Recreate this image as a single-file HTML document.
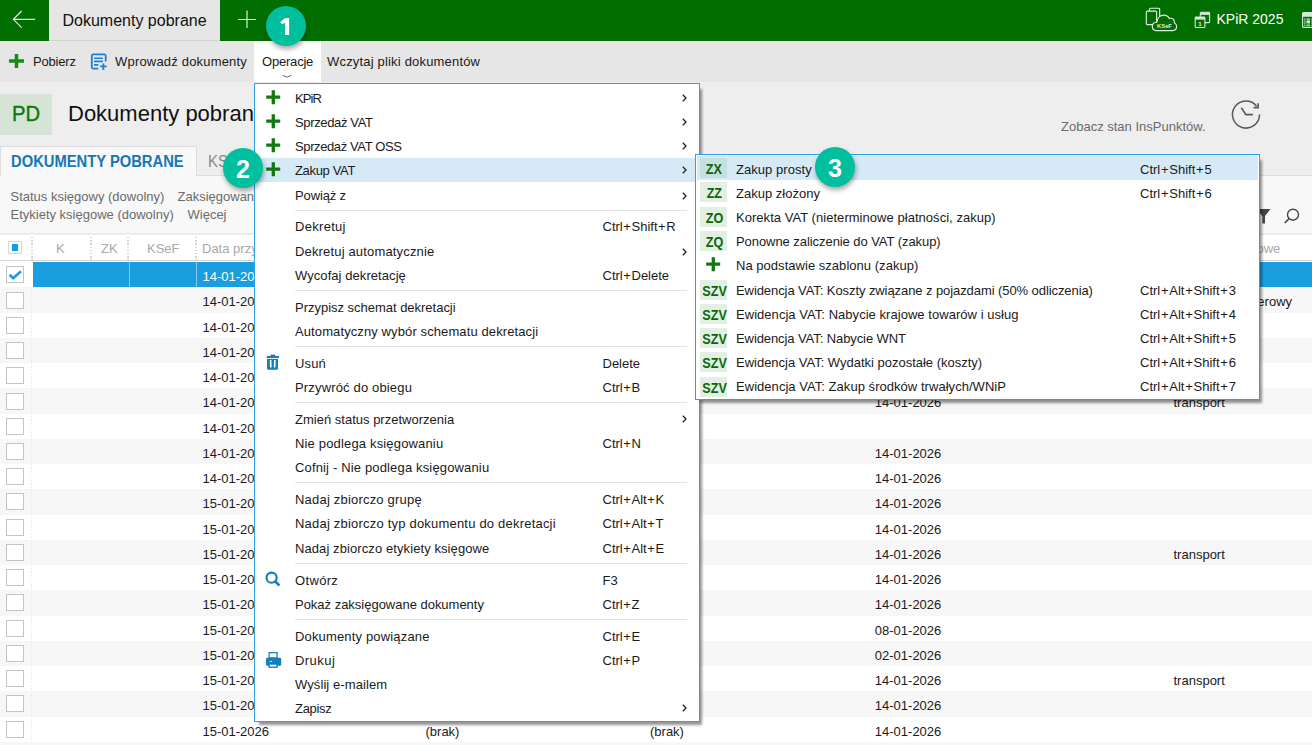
<!DOCTYPE html>
<html><head><meta charset="utf-8"><style>
*{box-sizing:border-box;margin:0;padding:0}
html,body{width:1312px;height:745px;overflow:hidden;background:#fff;font-family:"Liberation Sans",sans-serif;font-size:13px;color:#1a1a1a}
.a{position:absolute}
.t{position:absolute;white-space:nowrap;line-height:1}
.g{background:#f7f7f7}
.cb{position:absolute;left:6px;width:18px;height:17px;border:1.5px solid #c4c4c4;background:#fff}
.sep{position:absolute;width:392px;height:1px;background:#e3e3e3}
.hl{background:#d5e9f7}
.bd{position:absolute;width:26.8px;height:20px;background:#e4efe4;color:#0a680a;font-weight:bold;font-size:14.5px;text-align:center;line-height:20px}
.bd span{display:inline-block;transform:translate(0.5px,1.3px) scaleX(0.87)}
.badge{position:absolute;width:40px;height:40px;border-radius:50%;background:#00bf9f;color:#fff;font-weight:bold;font-size:25px;text-align:center;line-height:42.6px;box-shadow:1px 3px 5px rgba(0,0,0,.35)}
</style></head><body>
<div class="a" style="left:0px;top:0px;width:1312px;height:41px;background:#006e00"></div>
<div class="a" style="left:49px;top:0px;width:171px;height:40px;background:#e6e6e6"></div>
<div class="a" style="left:49px;top:40px;width:171px;height:1px;background:#c9d8c9"></div>
<div class="t" style="left:62.50px;top:12.76px;font-size:16px;color:#111">Dokumenty pobrane</div>
<svg class="a" style="left:0px;top:0px" width="49" height="41" viewBox="0 0 49 41"><path d="M35.2 19.3H13.6M21.6 11L13.4 19.3L21.6 27.6" fill="none" stroke="#e4eee4" stroke-width="1.15"/></svg>
<svg class="a" style="left:236px;top:9px" width="22" height="22" viewBox="0 0 22 22"><path d="M11 1.5V19M2 10.5h18" fill="none" stroke="#dfe9df" stroke-width="1.2"/></svg>
<div class="t" style="left:1216.50px;top:12.35px;font-size:14px;color:#fff">KPiR 2025</div>
<div class="a" style="left:0px;top:41px;width:1312px;height:41px;background:#e6e6e6"></div>
<div class="a" style="left:254px;top:41px;width:67px;height:41px;background:#fff"></div>
<div class="t" style="left:33.00px;top:55.20px;letter-spacing:-0.2px">Pobierz</div>
<div class="t" style="left:115.00px;top:55.20px;letter-spacing:0.19px">Wprowadź dokumenty</div>
<div class="t" style="left:262.00px;top:55.20px;letter-spacing:-0.2px">Operacje</div>
<div class="t" style="left:327.00px;top:55.20px;letter-spacing:0.18px">Wczytaj pliki dokumentów</div>
<div class="a" style="left:0px;top:82px;width:1312px;height:152px;background:#eeeeee"></div>
<div class="a" style="left:0px;top:94px;width:52px;height:41px;background:#d6e4d6"></div>
<div class="t" style="left:12.20px;top:102.75px;font-size:22.5px;color:#0b790b;-webkit-text-stroke:0.4px #0b790b;transform:scaleX(0.9);transform-origin:0 0">PD</div>
<div class="t" style="left:68.00px;top:102.68px;font-size:22px;color:#111">Dokumenty pobrane</div>
<div class="t" style="left:1061.00px;top:119.60px;color:#6b6b6b">Zobacz stan InsPunktów.</div>
<div class="a" style="left:0px;top:175px;width:1312px;height:1px;background:#dedede"></div>
<div class="a" style="left:0px;top:146px;width:197px;height:30px;background:#f8f8f8;border:1px solid #dedede;border-bottom:none"></div>
<div class="a" style="left:0px;top:176px;width:1312px;height:58px;background:#f8f8f8"></div>
<div class="t" style="left:11.30px;top:153.66px;font-size:16px;font-weight:bold;color:#1477b5;transform:scaleX(0.922);transform-origin:0 0">DOKUMENTY POBRANE</div>
<div class="t" style="left:208.00px;top:153.66px;font-size:16px;color:#8a8a8a;transform:scaleX(0.93);transform-origin:0 0">KSEF</div>
<div class="t" style="left:10.50px;top:190.40px;color:#6b6b6b">Status księgowy (dowolny)</div>
<div class="t" style="left:177.50px;top:190.40px;color:#6b6b6b">Zaksięgowany</div>
<div class="t" style="left:10.50px;top:207.80px;color:#6b6b6b">Etykiety księgowe (dowolny)</div>
<div class="t" style="left:187.50px;top:207.80px;color:#6b6b6b">Więcej</div>
<div class="a" style="left:0px;top:234px;width:1312px;height:27px;background:#fff;border-bottom:1px solid #d6d6d6"></div>
<div class="a" style="left:8px;top:241px;width:14px;height:13px;border:1px solid #d6d6d6;background:#fff"></div>
<div class="a" style="left:12px;top:244px;width:6px;height:7px;background:#0ea0e0"></div>
<div class="a" style="left:0px;top:233px;width:1312px;height:1.6px;background:#ececec"></div>
<div class="t" style="left:56.00px;top:242.20px;color:#a8a8a8">K</div>
<div class="t" style="left:101.00px;top:242.20px;color:#a8a8a8">ZK</div>
<div class="t" style="left:147.00px;top:242.20px;color:#a8a8a8">KSeF</div>
<div class="t" style="left:202.00px;top:242.20px;color:#a8a8a8">Data przyjęcia</div>
<div class="t" style="left:1177.00px;top:242.20px;color:#a8a8a8">Etykiety księgowe</div>
<div class="a" style="left:30.5px;top:237px;width:2px;height:23px;background:repeating-linear-gradient(to bottom,#d4d4d4 0 1.5px,transparent 1.5px 3.2px)"></div>
<div class="a" style="left:89.5px;top:237px;width:2px;height:23px;background:repeating-linear-gradient(to bottom,#d4d4d4 0 1.5px,transparent 1.5px 3.2px)"></div>
<div class="a" style="left:126.5px;top:237px;width:2px;height:23px;background:repeating-linear-gradient(to bottom,#d4d4d4 0 1.5px,transparent 1.5px 3.2px)"></div>
<div class="a" style="left:194.5px;top:237px;width:2px;height:23px;background:repeating-linear-gradient(to bottom,#d4d4d4 0 1.5px,transparent 1.5px 3.2px)"></div>
<div class="a" style="left:33px;top:262.00px;width:1279px;height:25.24px;background:#1b9ee0"></div>
<div class="cb" style="top:266.30px"></div>
<svg class="a" style="left:8px;top:269.0px" width="15" height="12" viewBox="0 0 15 12"><path d="M1.6 5.8L5.2 9.2L13 2.2" fill="none" stroke="#1b9ee0" stroke-width="2.6"/></svg>
<div class="a" style="left:129px;top:262.00px;width:1px;height:25.24px;background:#86c9ee"></div>
<div class="a" style="left:196px;top:262.00px;width:1px;height:25.24px;background:#86c9ee"></div>
<div class="t" style="left:202.50px;top:270.20px;color:#fff">14-01-2026</div>
<div class="a g" style="left:0;top:287.24px;width:1312px;height:25.54px"></div>
<div class="cb" style="top:291.54px"></div>
<div class="a" style="left:31px;top:287.24px;width:1px;height:25.24px;background:repeating-linear-gradient(to bottom,#ebebeb 0 1.5px,transparent 1.5px 3.2px)"></div>
<div class="t" style="left:202.50px;top:295.44px;">14-01-2026</div>
<div class="t" style="left:874.80px;top:295.44px;">14-01-2026</div>
<div class="t" style="left:1181.50px;top:295.44px;">transport rowerowy</div>
<div class="cb" style="top:316.78px"></div>
<div class="a" style="left:31px;top:312.48px;width:1px;height:25.24px;background:repeating-linear-gradient(to bottom,#ebebeb 0 1.5px,transparent 1.5px 3.2px)"></div>
<div class="t" style="left:202.50px;top:320.68px;">14-01-2026</div>
<div class="t" style="left:874.80px;top:320.68px;">14-01-2026</div>
<div class="a g" style="left:0;top:337.72px;width:1312px;height:25.54px"></div>
<div class="cb" style="top:342.02px"></div>
<div class="a" style="left:31px;top:337.72px;width:1px;height:25.24px;background:repeating-linear-gradient(to bottom,#ebebeb 0 1.5px,transparent 1.5px 3.2px)"></div>
<div class="t" style="left:202.50px;top:345.92px;">14-01-2026</div>
<div class="t" style="left:874.80px;top:345.92px;">14-01-2026</div>
<div class="cb" style="top:367.26px"></div>
<div class="a" style="left:31px;top:362.96px;width:1px;height:25.24px;background:repeating-linear-gradient(to bottom,#ebebeb 0 1.5px,transparent 1.5px 3.2px)"></div>
<div class="t" style="left:202.50px;top:371.16px;">14-01-2026</div>
<div class="t" style="left:874.80px;top:371.16px;">14-01-2026</div>
<div class="a g" style="left:0;top:388.20px;width:1312px;height:25.54px"></div>
<div class="cb" style="top:392.50px"></div>
<div class="a" style="left:31px;top:388.20px;width:1px;height:25.24px;background:repeating-linear-gradient(to bottom,#ebebeb 0 1.5px,transparent 1.5px 3.2px)"></div>
<div class="t" style="left:202.50px;top:396.40px;">14-01-2026</div>
<div class="t" style="left:874.80px;top:396.40px;">14-01-2026</div>
<div class="t" style="left:1173.50px;top:396.40px;">transport</div>
<div class="cb" style="top:417.74px"></div>
<div class="a" style="left:31px;top:413.44px;width:1px;height:25.24px;background:repeating-linear-gradient(to bottom,#ebebeb 0 1.5px,transparent 1.5px 3.2px)"></div>
<div class="t" style="left:202.50px;top:421.64px;">14-01-2026</div>
<div class="a g" style="left:0;top:438.68px;width:1312px;height:25.54px"></div>
<div class="cb" style="top:442.98px"></div>
<div class="a" style="left:31px;top:438.68px;width:1px;height:25.24px;background:repeating-linear-gradient(to bottom,#ebebeb 0 1.5px,transparent 1.5px 3.2px)"></div>
<div class="t" style="left:202.50px;top:446.88px;">14-01-2026</div>
<div class="t" style="left:874.80px;top:446.88px;">14-01-2026</div>
<div class="cb" style="top:468.22px"></div>
<div class="a" style="left:31px;top:463.92px;width:1px;height:25.24px;background:repeating-linear-gradient(to bottom,#ebebeb 0 1.5px,transparent 1.5px 3.2px)"></div>
<div class="t" style="left:202.50px;top:472.12px;">14-01-2026</div>
<div class="t" style="left:874.80px;top:472.12px;">14-01-2026</div>
<div class="a g" style="left:0;top:489.16px;width:1312px;height:25.54px"></div>
<div class="cb" style="top:493.46px"></div>
<div class="a" style="left:31px;top:489.16px;width:1px;height:25.24px;background:repeating-linear-gradient(to bottom,#ebebeb 0 1.5px,transparent 1.5px 3.2px)"></div>
<div class="t" style="left:202.50px;top:497.36px;">15-01-2026</div>
<div class="t" style="left:874.80px;top:497.36px;">14-01-2026</div>
<div class="cb" style="top:518.70px"></div>
<div class="a" style="left:31px;top:514.40px;width:1px;height:25.24px;background:repeating-linear-gradient(to bottom,#ebebeb 0 1.5px,transparent 1.5px 3.2px)"></div>
<div class="t" style="left:202.50px;top:522.60px;">15-01-2026</div>
<div class="t" style="left:874.80px;top:522.60px;">14-01-2026</div>
<div class="a g" style="left:0;top:539.64px;width:1312px;height:25.54px"></div>
<div class="cb" style="top:543.94px"></div>
<div class="a" style="left:31px;top:539.64px;width:1px;height:25.24px;background:repeating-linear-gradient(to bottom,#ebebeb 0 1.5px,transparent 1.5px 3.2px)"></div>
<div class="t" style="left:202.50px;top:547.84px;">15-01-2026</div>
<div class="t" style="left:874.80px;top:547.84px;">14-01-2026</div>
<div class="t" style="left:1173.50px;top:547.84px;">transport</div>
<div class="cb" style="top:569.18px"></div>
<div class="a" style="left:31px;top:564.88px;width:1px;height:25.24px;background:repeating-linear-gradient(to bottom,#ebebeb 0 1.5px,transparent 1.5px 3.2px)"></div>
<div class="t" style="left:202.50px;top:573.08px;">15-01-2026</div>
<div class="t" style="left:874.80px;top:573.08px;">14-01-2026</div>
<div class="a g" style="left:0;top:590.12px;width:1312px;height:25.54px"></div>
<div class="cb" style="top:594.42px"></div>
<div class="a" style="left:31px;top:590.12px;width:1px;height:25.24px;background:repeating-linear-gradient(to bottom,#ebebeb 0 1.5px,transparent 1.5px 3.2px)"></div>
<div class="t" style="left:202.50px;top:598.32px;">15-01-2026</div>
<div class="t" style="left:874.80px;top:598.32px;">14-01-2026</div>
<div class="cb" style="top:619.66px"></div>
<div class="a" style="left:31px;top:615.36px;width:1px;height:25.24px;background:repeating-linear-gradient(to bottom,#ebebeb 0 1.5px,transparent 1.5px 3.2px)"></div>
<div class="t" style="left:202.50px;top:623.56px;">15-01-2026</div>
<div class="t" style="left:874.80px;top:623.56px;">08-01-2026</div>
<div class="a g" style="left:0;top:640.60px;width:1312px;height:25.54px"></div>
<div class="cb" style="top:644.90px"></div>
<div class="a" style="left:31px;top:640.60px;width:1px;height:25.24px;background:repeating-linear-gradient(to bottom,#ebebeb 0 1.5px,transparent 1.5px 3.2px)"></div>
<div class="t" style="left:202.50px;top:648.80px;">15-01-2026</div>
<div class="t" style="left:874.80px;top:648.80px;">02-01-2026</div>
<div class="cb" style="top:670.14px"></div>
<div class="a" style="left:31px;top:665.84px;width:1px;height:25.24px;background:repeating-linear-gradient(to bottom,#ebebeb 0 1.5px,transparent 1.5px 3.2px)"></div>
<div class="t" style="left:202.50px;top:674.04px;">15-01-2026</div>
<div class="t" style="left:874.80px;top:674.04px;">14-01-2026</div>
<div class="t" style="left:1173.50px;top:674.04px;">transport</div>
<div class="a g" style="left:0;top:691.08px;width:1312px;height:25.54px"></div>
<div class="cb" style="top:695.38px"></div>
<div class="a" style="left:31px;top:691.08px;width:1px;height:25.24px;background:repeating-linear-gradient(to bottom,#ebebeb 0 1.5px,transparent 1.5px 3.2px)"></div>
<div class="t" style="left:202.50px;top:699.28px;">15-01-2026</div>
<div class="t" style="left:874.80px;top:699.28px;">14-01-2026</div>
<div class="cb" style="top:720.62px"></div>
<div class="a" style="left:31px;top:716.32px;width:1px;height:25.24px;background:repeating-linear-gradient(to bottom,#ebebeb 0 1.5px,transparent 1.5px 3.2px)"></div>
<div class="t" style="left:202.50px;top:724.52px;">15-01-2026</div>
<div class="t" style="left:425.50px;top:724.52px;">(brak)</div>
<div class="t" style="left:650.00px;top:724.52px;">(brak)</div>
<div class="t" style="left:874.80px;top:724.52px;">14-01-2026</div>
<div class="a g" style="left:0;top:741.56px;width:1312px;height:25.54px"></div>
<div class="cb" style="top:745.86px"></div>
<div class="a" style="left:31px;top:741.56px;width:1px;height:25.24px;background:repeating-linear-gradient(to bottom,#ebebeb 0 1.5px,transparent 1.5px 3.2px)"></div>
<div class="t" style="left:202.50px;top:749.76px;">15-01-2026</div>
<svg class="a" style="left:9px;top:54px" width="15" height="14" viewBox="0 0 15 14"><path d="M7.5 0v14M0 7M0 7h15" stroke="#178a17" stroke-width="3.5"/></svg>
<svg class="a" style="left:90px;top:53px" width="18" height="18" viewBox="0 0 18 18"><path d="M8.3 15.6H3.3A1.5 1.5 0 0 1 1.8 14.1V2.9A1.5 1.5 0 0 1 3.3 1.4H14.2A1.5 1.5 0 0 1 15.7 2.9V8.4" fill="none" stroke="#1f7fd0" stroke-width="1.8"/><path d="M4.6 5.3h7.6M4.6 8.4h7.6M4.6 11.9h3.2" stroke="#1f7fd0" stroke-width="1.6" stroke-linecap="round"/><path d="M13.4 10.5v6.4M10.2 13.4h6.4" stroke="#1f7fd0" stroke-width="1.8"/></svg>
<svg class="a" style="left:282px;top:74px" width="10" height="5" viewBox="0 0 10 5"><path d="M1 1.2Q5 4.8 9 1.2" fill="none" stroke="#777" stroke-width="1.1"/></svg>
<svg class="a" style="left:1145px;top:7px" width="34" height="26" viewBox="0 0 34 26"><rect x="4.5" y="1.3" width="10.2" height="12" rx="1" fill="#006e00" stroke="#e3efe3" stroke-width="1.1"/><rect x="1.3" y="4.1" width="10.3" height="13.5" rx="1" fill="#006e00" stroke="#e3efe3" stroke-width="1.1"/><path d="M11.5 23.6C8.5 23.6 7.3 21.5 7.3 19.6C7.3 17.2 9.2 15.3 11.8 15.2C12.2 11 15 8.1 18.8 8.1C21.8 8.1 23.5 9.8 24.3 11.5C25 11.2 25.8 11.1 26.5 11.3C28.5 11.9 29.6 13.8 29.3 15.8C30.9 16.6 31.6 18 31.6 19.6C31.6 21.8 30 23.6 27.5 23.6Z" fill="#006e00" stroke="#e3efe3" stroke-width="1.1"/><text x="19.5" y="20.6" font-family="Liberation Sans" font-weight="bold" font-size="5.8" fill="#dfeadf" text-anchor="middle" style="text-rendering:geometricPrecision">KSeF</text></svg>
<svg class="a" style="left:1194px;top:11px" width="17" height="18" viewBox="0 0 17 18"><rect x="6.3" y="1.3" width="9.3" height="10.3" rx="0.8" fill="#006e00" stroke="#d8e8d8" stroke-width="1.1"/><rect x="6.3" y="1.3" width="9.3" height="2.6" fill="#d8e8d8"/><rect x="1.2" y="6" width="9.7" height="10.5" rx="0.8" fill="#006e00" stroke="#d8e8d8" stroke-width="1.1"/><rect x="1.2" y="6" width="9.7" height="2.6" fill="#d8e8d8"/><text x="6" y="15" font-family="Liberation Sans" font-weight="bold" font-size="6" fill="#e8f0e8" text-anchor="middle">1</text></svg>
<svg class="a" style="left:1302px;top:12px" width="14" height="16" viewBox="0 0 14 16"><rect x="0.6" y="0.6" width="16" height="14.8" rx="1" fill="#006e00" stroke="#d8e8d8" stroke-width="1.1"/><rect x="0.6" y="0.6" width="16" height="4.2" fill="#d8e8d8"/><g fill="#d8e8d8"><rect x="2.2" y="6.5" width="1.3" height="1.2"/><rect x="4.5" y="6.5" width="3.5" height="1.2"/><rect x="2.2" y="8.5" width="1.3" height="1.2"/><rect x="4.5" y="8.4" width="3.5" height="3"/><rect x="2.2" y="10.5" width="1.3" height="1.2"/><rect x="2.2" y="12.6" width="1.3" height="1.2"/><rect x="4.5" y="12.6" width="3.5" height="1.2"/><rect x="9.3" y="6.5" width="3" height="1.2"/><rect x="9.3" y="8.5" width="3" height="1.2"/><rect x="9.3" y="10.5" width="3" height="1.2"/><rect x="9.3" y="12.6" width="3" height="1.2"/></g></svg>
<svg class="a" style="left:1228px;top:96px" width="36" height="36" viewBox="0 0 36 36"><path d="M31.5 18.5A13.5 13.5 0 1 1 28.6 10.2" fill="none" stroke="#585858" stroke-width="1.5"/><path d="M30.2 7.2V11.6H25.6" fill="none" stroke="#585858" stroke-width="1.6"/><path d="M13.3 11.8L17.9 18.6H24.9" fill="none" stroke="#585858" stroke-width="1.6"/></svg>
<svg class="a" style="left:1256px;top:208px" width="16" height="16" viewBox="0 0 16 16"><path d="M0.8 1.1H14.5L9 8V15.5H6.3V8Z" fill="#454545"/></svg>
<svg class="a" style="left:1283px;top:208px" width="18" height="17" viewBox="0 0 18 17"><circle cx="10" cy="6.7" r="5.5" fill="none" stroke="#444" stroke-width="1.4"/><path d="M6.3 10.5L1.8 15" stroke="#444" stroke-width="1.7"/></svg>
<div class="a" style="left:254px;top:83px;width:446px;height:639px;background:#fff;border:1px solid #2ea2e4;box-shadow:3.5px 4.5px 2.5px -1.5px rgba(0,0,0,.42)"></div>
<svg class="a" style="left:266px;top:89.82px" width="15" height="15" viewBox="0 0 15 15"><path d="M7.3 0.2v14M0.2 7.1h14" stroke="#107810" stroke-width="3.3"/></svg>
<div class="t" style="left:295.00px;top:91.80px;letter-spacing:-0.933px">KPiR</div>
<svg class="a" style="left:681.5px;top:94.3px" width="6" height="9" viewBox="0 0 6 9"><path d="M0.8 0.8L4 4L0.8 7.2" fill="none" stroke="#222" stroke-width="1.3"/></svg>
<svg class="a" style="left:266px;top:113.97px" width="15" height="15" viewBox="0 0 15 15"><path d="M7.3 0.2v14M0.2 7.1h14" stroke="#107810" stroke-width="3.3"/></svg>
<div class="t" style="left:295.00px;top:115.70px;letter-spacing:-0.355px">Sprzedaż VAT</div>
<svg class="a" style="left:681.5px;top:118.2px" width="6" height="9" viewBox="0 0 6 9"><path d="M0.8 0.8L4 4L0.8 7.2" fill="none" stroke="#222" stroke-width="1.3"/></svg>
<svg class="a" style="left:266px;top:138.12px" width="15" height="15" viewBox="0 0 15 15"><path d="M7.3 0.2v14M0.2 7.1h14" stroke="#107810" stroke-width="3.3"/></svg>
<div class="t" style="left:295.00px;top:139.70px;letter-spacing:-0.387px">Sprzedaż VAT OSS</div>
<svg class="a" style="left:681.5px;top:142.2px" width="6" height="9" viewBox="0 0 6 9"><path d="M0.8 0.8L4 4L0.8 7.2" fill="none" stroke="#222" stroke-width="1.3"/></svg>
<div class="a" style="left:255px;top:158.37px;width:440px;height:23.7px;background:#d5e9f7"></div>
<svg class="a" style="left:266px;top:162.27px" width="15" height="15" viewBox="0 0 15 15"><path d="M7.3 0.2v14M0.2 7.1h14" stroke="#107810" stroke-width="3.3"/></svg>
<div class="t" style="left:295.00px;top:163.60px;letter-spacing:-0.338px">Zakup VAT</div>
<svg class="a" style="left:681.5px;top:166.1px" width="6" height="9" viewBox="0 0 6 9"><path d="M0.8 0.8L4 4L0.8 7.2" fill="none" stroke="#222" stroke-width="1.3"/></svg>
<div class="t" style="left:295.00px;top:189.10px;letter-spacing:-0.129px">Powiąż z</div>
<svg class="a" style="left:681.5px;top:191.6px" width="6" height="9" viewBox="0 0 6 9"><path d="M0.8 0.8L4 4L0.8 7.2" fill="none" stroke="#222" stroke-width="1.3"/></svg>
<div class="a" style="left:295px;top:209.8px;width:392px;height:1.2px;background:#e3e3e3"></div>
<div class="t" style="left:295.00px;top:220.00px;letter-spacing:0.3px">Dekretuj</div>
<div class="t" style="left:602.50px;top:220.00px;">Ctrl<span style="margin:0 0.6px">+</span>Shift<span style="margin:0 0.6px">+</span>R</div>
<div class="t" style="left:295.00px;top:245.10px;letter-spacing:0.162px">Dekretuj automatycznie</div>
<svg class="a" style="left:681.5px;top:247.6px" width="6" height="9" viewBox="0 0 6 9"><path d="M0.8 0.8L4 4L0.8 7.2" fill="none" stroke="#222" stroke-width="1.3"/></svg>
<div class="t" style="left:295.00px;top:269.00px;letter-spacing:0.065px">Wycofaj dekretację</div>
<div class="t" style="left:602.50px;top:269.00px;">Ctrl<span style="margin:0 0.6px">+</span>Delete</div>
<div class="a" style="left:295px;top:290px;width:392px;height:1.2px;background:#e3e3e3"></div>
<div class="t" style="left:295.00px;top:301.00px;letter-spacing:-0.019px">Przypisz schemat dekretacji</div>
<div class="t" style="left:295.00px;top:324.80px;letter-spacing:0.105px">Automatyczny wybór schematu dekretacji</div>
<div class="a" style="left:295px;top:346.1px;width:392px;height:1.2px;background:#e3e3e3"></div>
<svg class="a" style="left:266px;top:353.12px" width="14" height="18" viewBox="0 0 14 18"><path d="M0.8 4h12.2" stroke="#137fbb" stroke-width="2.2"/><rect x="4.7" y="1.6" width="4.3" height="1.8" fill="#137fbb"/><path d="M1 5.9V15.3Q1 16.8 2.5 16.8H10.5Q12 16.8 12 15.3V5.9Z" fill="#137fbb"/><path d="M4.6 7L4.8 14.6M8.85 7L8.65 14.6" stroke="#fff" stroke-width="1.6"/></svg>
<div class="t" style="left:295.00px;top:356.70px;letter-spacing:0.167px">Usuń</div>
<div class="t" style="left:602.50px;top:356.70px;">Delete</div>
<div class="t" style="left:295.00px;top:380.70px;letter-spacing:0.159px">Przywróć do obiegu</div>
<div class="t" style="left:602.50px;top:380.70px;">Ctrl<span style="margin:0 0.6px">+</span>B</div>
<div class="a" style="left:295px;top:401.8px;width:392px;height:1.2px;background:#e3e3e3"></div>
<div class="t" style="left:295.00px;top:412.70px;letter-spacing:0.008px">Zmień status przetworzenia</div>
<svg class="a" style="left:681.5px;top:415.2px" width="6" height="9" viewBox="0 0 6 9"><path d="M0.8 0.8L4 4L0.8 7.2" fill="none" stroke="#222" stroke-width="1.3"/></svg>
<div class="t" style="left:295.00px;top:436.90px;letter-spacing:0.164px">Nie podlega księgowaniu</div>
<div class="t" style="left:602.50px;top:436.90px;">Ctrl<span style="margin:0 0.6px">+</span>N</div>
<div class="t" style="left:295.00px;top:460.80px;letter-spacing:0.155px">Cofnij - Nie podlega księgowaniu</div>
<div class="a" style="left:295px;top:482.1px;width:392px;height:1.2px;background:#e3e3e3"></div>
<div class="t" style="left:295.00px;top:492.60px;letter-spacing:0.2px">Nadaj zbiorczo grupę</div>
<div class="t" style="left:602.50px;top:492.60px;">Ctrl<span style="margin:0 0.6px">+</span>Alt<span style="margin:0 0.6px">+</span>K</div>
<div class="t" style="left:295.00px;top:516.50px;letter-spacing:0.205px">Nadaj zbiorczo typ dokumentu do dekretacji</div>
<div class="t" style="left:602.50px;top:516.50px;">Ctrl<span style="margin:0 0.6px">+</span>Alt<span style="margin:0 0.6px">+</span>T</div>
<div class="t" style="left:295.00px;top:541.60px;letter-spacing:0.09px">Nadaj zbiorczo etykiety księgowe</div>
<div class="t" style="left:602.50px;top:541.60px;">Ctrl<span style="margin:0 0.6px">+</span>Alt<span style="margin:0 0.6px">+</span>E</div>
<div class="a" style="left:295px;top:563px;width:392px;height:1.2px;background:#e3e3e3"></div>
<svg class="a" style="left:264.7px;top:569.82px" width="17" height="18" viewBox="0 0 17 18"><circle cx="6.6" cy="7.7" r="5.1" fill="none" stroke="#137fbb" stroke-width="2.1"/><path d="M10.2 11.4L14.4 15.5" stroke="#137fbb" stroke-width="2.6"/></svg>
<div class="t" style="left:295.00px;top:573.60px;letter-spacing:0.34px">Otwórz</div>
<div class="t" style="left:602.50px;top:573.60px;">F3</div>
<div class="t" style="left:295.00px;top:597.70px;letter-spacing:-0.015px">Pokaż zaksięgowane dokumenty</div>
<div class="t" style="left:602.50px;top:597.70px;">Ctrl<span style="margin:0 0.6px">+</span>Z</div>
<div class="a" style="left:295px;top:619.1px;width:392px;height:1.2px;background:#e3e3e3"></div>
<div class="t" style="left:295.00px;top:629.60px;letter-spacing:0.161px">Dokumenty powiązane</div>
<div class="t" style="left:602.50px;top:629.60px;">Ctrl<span style="margin:0 0.6px">+</span>E</div>
<svg class="a" style="left:264.5px;top:650.27px" width="17" height="18" viewBox="0 0 17 18"><rect x="4.1" y="2.7" width="8" height="5.2" fill="none" stroke="#137fbb" stroke-width="1.25"/><rect x="1" y="7.8" width="15.2" height="8" rx="1.4" fill="#137fbb"/><rect x="4.1" y="14" width="8" height="3.2" fill="#fff" stroke="#137fbb" stroke-width="1.4"/><path d="M4.6 11.4H7.2" stroke="#cfe6f3" stroke-width="1"/></svg>
<div class="t" style="left:295.00px;top:653.80px;letter-spacing:0.44px">Drukuj</div>
<div class="t" style="left:602.50px;top:653.80px;">Ctrl<span style="margin:0 0.6px">+</span>P</div>
<div class="t" style="left:295.00px;top:677.60px;letter-spacing:0.086px">Wyślij e-mailem</div>
<div class="t" style="left:295.00px;top:701.80px;letter-spacing:-0.3px">Zapisz</div>
<svg class="a" style="left:681.5px;top:704.3px" width="6" height="9" viewBox="0 0 6 9"><path d="M0.8 0.8L4 4L0.8 7.2" fill="none" stroke="#222" stroke-width="1.3"/></svg>
<div class="a" style="left:695px;top:154px;width:565px;height:246px;background:#fff;border:1px solid #2ea2e4;box-shadow:3.5px 4.5px 2.5px -1.5px rgba(0,0,0,.42)"></div>
<div class="a" style="left:697.2px;top:156.2px;width:561px;height:23.6px;background:#d5e9f7"></div>
<div class="bd" style="left:700.3px;top:158.20px;background:#c4e0e0;"><span>ZX</span></div>
<div class="t" style="left:736.00px;top:162.80px;letter-spacing:0.045px">Zakup prosty</div>
<div class="t" style="left:1140.00px;top:162.80px;">Ctrl<span style="margin:0 0.75px">+</span>Shift<span style="margin:0 0.75px">+</span>5</div>
<div class="bd" style="left:700.3px;top:182.47px;"><span>ZZ</span></div>
<div class="t" style="left:736.00px;top:186.95px;letter-spacing:0.017px">Zakup złożony</div>
<div class="t" style="left:1140.00px;top:186.95px;">Ctrl<span style="margin:0 0.75px">+</span>Shift<span style="margin:0 0.75px">+</span>6</div>
<div class="bd" style="left:700.3px;top:206.74px;"><span>ZO</span></div>
<div class="t" style="left:736.00px;top:211.10px;letter-spacing:0.04px">Korekta VAT (nieterminowe płatności, zakup)</div>
<div class="bd" style="left:700.3px;top:231.01px;"><span>ZQ</span></div>
<div class="t" style="left:736.00px;top:235.25px;letter-spacing:-0.062px">Ponowne zaliczenie do VAT (zakup)</div>
<svg class="a" style="left:706px;top:257.08px" width="15" height="15" viewBox="0 0 15 15"><path d="M7.3 0.2v14M0.2 7.1h14" stroke="#107810" stroke-width="3.3"/></svg>
<div class="t" style="left:736.00px;top:259.40px;letter-spacing:0.032px">Na podstawie szablonu (zakup)</div>
<div class="bd" style="left:700.3px;top:279.55px;"><span>SZV</span></div>
<div class="t" style="left:736.00px;top:283.55px;letter-spacing:-0.079px">Ewidencja VAT: Koszty związane z pojazdami (50% odliczenia)</div>
<div class="t" style="left:1140.00px;top:283.55px;">Ctrl<span style="margin:0 0.75px">+</span>Alt<span style="margin:0 0.75px">+</span>Shift<span style="margin:0 0.75px">+</span>3</div>
<div class="bd" style="left:700.3px;top:303.82px;"><span>SZV</span></div>
<div class="t" style="left:736.00px;top:307.70px;letter-spacing:0.042px">Ewidencja VAT: Nabycie krajowe towarów i usług</div>
<div class="t" style="left:1140.00px;top:307.70px;">Ctrl<span style="margin:0 0.75px">+</span>Alt<span style="margin:0 0.75px">+</span>Shift<span style="margin:0 0.75px">+</span>4</div>
<div class="bd" style="left:700.3px;top:328.09px;"><span>SZV</span></div>
<div class="t" style="left:736.00px;top:331.85px;letter-spacing:-0.088px">Ewidencja VAT: Nabycie WNT</div>
<div class="t" style="left:1140.00px;top:331.85px;">Ctrl<span style="margin:0 0.75px">+</span>Alt<span style="margin:0 0.75px">+</span>Shift<span style="margin:0 0.75px">+</span>5</div>
<div class="bd" style="left:700.3px;top:352.36px;"><span>SZV</span></div>
<div class="t" style="left:736.00px;top:356.00px;letter-spacing:-0.01px">Ewidencja VAT: Wydatki pozostałe (koszty)</div>
<div class="t" style="left:1140.00px;top:356.00px;">Ctrl<span style="margin:0 0.75px">+</span>Alt<span style="margin:0 0.75px">+</span>Shift<span style="margin:0 0.75px">+</span>6</div>
<div class="bd" style="left:700.3px;top:376.63px;"><span>SZV</span></div>
<div class="t" style="left:736.00px;top:380.15px;letter-spacing:0.041px">Ewidencja VAT: Zakup środków trwałych/WNiP</div>
<div class="t" style="left:1140.00px;top:380.15px;">Ctrl<span style="margin:0 0.75px">+</span>Alt<span style="margin:0 0.75px">+</span>Shift<span style="margin:0 0.75px">+</span>7</div>
<div class="badge" style="left:266px;top:6px"></div>
<svg class="a" style="left:266px;top:6px" width="40" height="40" viewBox="0 0 40 40"><path d="M19.1 12H23.1V29H19.1V16.4L16.3 18.6L14.2 16.3Z" fill="#fff"/></svg>
<div class="badge" style="left:223px;top:148px">2</div>
<div class="badge" style="left:815px;top:147px">3</div>
</body></html>
